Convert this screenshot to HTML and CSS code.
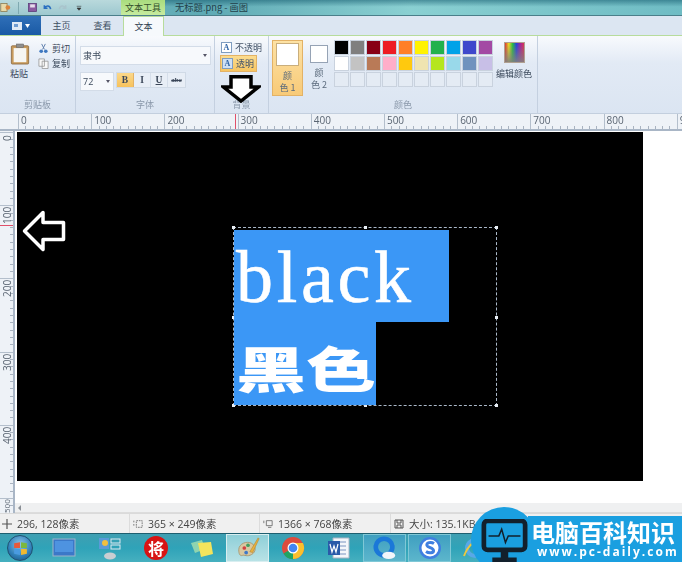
FILE: index.html
```html
<!DOCTYPE html>
<html lang="zh">
<head>
<meta charset="utf-8">
<title>无标题.png - 画图</title>
<link rel="stylesheet" href="styles.css">
</head>
<body>
<div class="app">
  <header class="titlebar">
    <div class="qat">
      <svg class="qi" viewBox="0 0 14 14"><rect x="1" y="2" width="8" height="10" fill="#e8d9a8" stroke="#8a7a50"/><circle cx="10" cy="7" r="3" fill="#d9823b"/></svg>
      <span class="qsep"></span>
      <svg class="qi" viewBox="0 0 14 14"><rect x="2" y="2" width="10" height="10" fill="#8a5aa0" stroke="#5a3a78"/><rect x="4" y="3" width="6" height="4" fill="#e6dcec"/></svg>
      <svg class="qi" viewBox="0 0 14 14"><path d="M3 4v4h4M3.500 8C5 4 10 4 11 9" fill="none" stroke="#2a6fc0" stroke-width="2"/></svg>
      <svg class="qi dim" viewBox="0 0 14 14"><path d="M11 4v4H7M10.500 8C9 4 4 4 3 9" fill="none" stroke="#a9c4cc" stroke-width="2"/></svg>
      <svg class="qi small" viewBox="0 0 14 14"><path d="M3 4h8M3.500 7h7l-3.500 4z" fill="#333" stroke="#333"/></svg>
    </div>
    <div class="tool-tab">文本工具</div>
    <div class="doc-title">无标题.png - 画图</div>
  </header>

  <nav class="tabs">
    <div class="file-btn"><svg viewBox="0 0 20 10" class="file-ico"><rect x="1" y="1" width="10" height="8" fill="#dfe9f5"/><rect x="3" y="3" width="4" height="3" fill="#6f9bd0"/><path d="M14 3h5l-2.500 4z" fill="#fff"/></svg></div>
    <div class="tab">主页</div>
    <div class="tab">查看</div>
    <div class="tab active">文本</div>
  </nav>

  <section class="ribbon">
    <div class="group g-clip">
      <div class="group-body clip-body">
        <div class="paste">
          <svg class="paste-ico" viewBox="0 0 22 24"><rect x="1.500" y="3" width="19" height="20" rx="1" fill="#c89b5c" stroke="#8f7048"/><rect x="4" y="5.500" width="14" height="15.500" fill="#f6f6f2"/><rect x="7" y="1" width="8" height="4" fill="#8f8f8f" stroke="#6a6a6a" stroke-width=".6"/></svg>
          <span>粘贴</span>
        </div>
        <div class="clip-actions">
          <div class="act"><svg viewBox="0 0 12 12"><path d="M4 1l3 6M8 1L5 7" stroke="#5a7ba8" fill="none"/><circle cx="3.500" cy="9" r="2" fill="#3f78c0"/><circle cx="8.500" cy="9" r="2" fill="#3f78c0"/></svg>剪切</div>
          <div class="act"><svg viewBox="0 0 12 12"><path d="M1 1h6v8H1zM4.500 3.500h6.500v8H4.500z" fill="#f8f8f8" stroke="#8f8f8f" stroke-width=".8"/></svg>复制</div>
        </div>
      </div>
      <div class="group-label">剪贴板</div>
    </div>

    <div class="group g-font">
      <div class="group-body font-body">
        <div class="select font-select"><span>隶书</span><i class="caret"></i></div>
        <div class="font-row">
          <div class="select size-select"><span>72</span><i class="caret"></i></div>
          <div class="fmt">
            <b class="fmt-btn on">B</b>
            <i class="fmt-btn">I</i>
            <u class="fmt-btn">U</u>
            <s class="fmt-btn abc">abc</s>
          </div>
        </div>
      </div>
      <div class="group-label">字体</div>
    </div>

    <div class="group g-bg">
      <div class="group-body bg-body">
        <div class="bg-opt"><span class="a-ico">A</span>不透明</div>
        <div class="bg-opt on"><span class="a-ico tr">A</span>透明</div>
      </div>
      <div class="group-label">背景</div>
    </div>

    <div class="group g-color">
      <div class="group-body color-body">
        <div class="color-btn on"><span class="swatch big"></span><span class="color-text">颜<br>色 1</span></div>
        <div class="color-btn"><span class="swatch"></span><span class="color-text">颜<br>色 2</span></div>
        <div class="palette">
          <span class="c c1"></span><span class="c c2"></span><span class="c c3"></span><span class="c c4"></span><span class="c c5"></span><span class="c c6"></span><span class="c c7"></span><span class="c c8"></span><span class="c c9"></span><span class="c c10"></span>
          <span class="c c11"></span><span class="c c12"></span><span class="c c13"></span><span class="c c14"></span><span class="c c15"></span><span class="c c16"></span><span class="c c17"></span><span class="c c18"></span><span class="c c19"></span><span class="c c20"></span>
          <span class="c"></span><span class="c"></span><span class="c"></span><span class="c"></span><span class="c"></span><span class="c"></span><span class="c"></span><span class="c"></span><span class="c"></span><span class="c"></span>
        </div>
        <div class="edit-color"><span class="rainbow"></span><span>编辑颜色</span></div>
      </div>
      <div class="group-label">颜色</div>
    </div>
  </section>

  <div class="hruler">
    <span>0</span><span>100</span><span>200</span><span>300</span><span>400</span><span>500</span><span>600</span><span>700</span><span>800</span><span>900</span>
    <i class="hmark"></i>
  </div>

  <main class="main">
    <div class="vruler">
      <span><em>0</em></span><span><em>100</em></span><span><em>200</em></span><span><em>300</em></span><span><em>400</em></span><span><em>500</em></span>
      <i class="vmark"></i>
    </div>
    <div class="work">
      <div class="canvas">
        <svg class="left-arrow" viewBox="0 0 44 42"><path d="M21 2.500L2.500 21 21 39.500V29.500H41.500V12.500H21z" fill="#000" stroke="#fff" stroke-width="3.500" stroke-linejoin="round"/></svg>
        <div class="selection">
          <i class="h h1"></i><i class="h h2"></i><i class="h h3"></i><i class="h h4"></i><i class="h h5"></i><i class="h h6"></i><i class="h h7"></i><i class="h h8"></i>
        </div>
        <div class="textbox">
          <div class="line-en">black</div>
          <div class="line-cn"><span>黑色</span></div>
        </div>
      </div>
      <div class="hscroll"><i class="scroll-left"></i></div>
    </div>
  </main>

  <footer class="status">
    <div class="st st1"><svg viewBox="0 0 10 10"><path d="M5 0v10M0 5h10" stroke="#555" stroke-width="1.200"/></svg>296, 128像素</div>
    <div class="st st2"><svg viewBox="0 0 12 10"><path d="M1 1v2M1 5v2M4 1h7v8H4z" fill="none" stroke="#666" stroke-dasharray="2 1"/></svg>365 × 249像素</div>
    <div class="st st3"><svg viewBox="0 0 12 10"><path d="M1 1v3M4 1h7v6H4zM6 9h4" fill="none" stroke="#666"/></svg>1366 × 768像素</div>
    <div class="st st4"><svg viewBox="0 0 10 10"><path d="M1 1h8v8H1zM3 1v3h4V1M3 9V6h4v3" fill="none" stroke="#555"/></svg>大小: 135.1KB</div>
  </footer>

  <div class="taskbar">
    <div class="orb"><svg viewBox="0 0 16 16"><path d="M2 3l5.500-1v5.500H2z" fill="#e8593a"/><path d="M8.500 2L14 3v4.500H8.500z" fill="#7cb83c"/><path d="M2 8.500h5.500V14L2 13z" fill="#4a9be0"/><path d="M8.500 8.500H14V13l-5.500 1z" fill="#f1b92f"/></svg></div>
    <div class="task"><svg viewBox="0 0 24 20"><rect x="1" y="1" width="22" height="17" fill="#3b78c8" stroke="#9fb4c8"/><rect x="3" y="3" width="18" height="11" fill="#4e93e0"/></svg></div>
    <div class="task"><svg viewBox="0 0 24 24"><rect x="1" y="2" width="10" height="11" fill="#5a9ad8"/><rect x="13" y="3" width="9" height="4" fill="none" stroke="#dfeaf2"/><rect x="13" y="9" width="9" height="4" fill="none" stroke="#dfeaf2"/><ellipse cx="12" cy="20" rx="6" ry="3.500" fill="#c9ced2"/><circle cx="7" cy="7" r="3" fill="#f0c040"/></svg></div>
    <div class="task"><span class="chess">将</span></div>
    <div class="task"><svg viewBox="0 0 24 22"><path d="M1 6l11-3 3 9-10 4z" fill="#8fd4b0"/><path d="M8 6l13-1 2 12-12 3z" fill="#f4e45c"/></svg></div>
    <div class="task lit"><svg viewBox="0 0 26 26"><path d="M3 15C3 8 12 5 17 8c5 3 5 9 0 12-5 3-8 0-10 1-3 1-4-2-4-6z" fill="#d8c8a0" stroke="#a89870"/><circle cx="9" cy="13" r="2" fill="#d04040"/><circle cx="13" cy="10" r="2" fill="#40a060"/><circle cx="11" cy="18" r="2" fill="#3f78c8"/><path d="M15 17L24 2l1 1-7 15z" fill="#e8b040" stroke="#a87820" stroke-width=".5"/></svg></div>
    <div class="task"><svg viewBox="0 0 24 24"><circle cx="12" cy="12" r="11" fill="#dd4b3e"/><path d="M12 12L2.500 17.500A11 11 0 0 0 14 23z" fill="#1fa463"/><path d="M12 7h9.900A11 11 0 0 1 12 23z" fill="#fbc02d"/><circle cx="12" cy="12" r="5.500" fill="#fff"/><circle cx="12" cy="12" r="4.300" fill="#4285f4"/></svg></div>
    <div class="task"><svg viewBox="0 0 24 24"><path d="M6 2h16v20H6z" fill="#f4f6fa" stroke="#a8b4c4"/><path d="M9 6h10M9 10h10M9 14h10M9 18h10" stroke="#7a94c0"/><rect x="1" y="5" width="12" height="14" fill="#2a5aa8"/><path d="M3 8l2 8 2-6 2 6 2-8" fill="none" stroke="#fff" stroke-width="1.200"/></svg></div>
    <div class="task lit2"><svg viewBox="0 0 26 26"><circle cx="12" cy="12" r="9" fill="none" stroke="#1b78d8" stroke-width="5"/><ellipse cx="17" cy="21" rx="7" ry="4" fill="#f2f6fa"/></svg></div>
    <div class="task lit2"><svg viewBox="0 0 24 24"><circle cx="12" cy="12" r="11" fill="#3f7fe0"/><circle cx="12" cy="12" r="8.500" fill="#fff"/><path d="M16 7.500c-3-2-8-1-7 2 1 2.500 6 2 6.500 5 .3 2.500-4.500 3-7.500 1" fill="none" stroke="#3f7fe0" stroke-width="3"/></svg></div>
    <div class="task"><svg viewBox="0 0 24 24"><circle cx="12" cy="12" r="8" fill="none" stroke="#58a8e8" stroke-width="4"/><path d="M1 20C5 8 16 1 22 3" fill="none" stroke="#f0c83c" stroke-width="2"/></svg></div>
  </div>

  <div class="brand">
    <div class="brand-circle">
      <svg viewBox="0 0 50 48" class="brand-ico"><rect x="3" y="2" width="44" height="31" rx="4" fill="#1a9fe0" stroke="#12202c" stroke-width="5"/><path d="M8 18h11l3-7 4 14 3-7h13" fill="none" stroke="#12202c" stroke-width="1.600"/><path d="M21 35h8v6h-8zM12 41h26v7H12z" fill="#12202c"/></svg>
    </div>
    <div class="brand-band">
      <div class="brand-cn">电脑百科知识</div>
      <div class="brand-url">www.pc-daily.com</div>
    </div>
  </div>

  <svg class="down-arrow" viewBox="0 0 40 28"><path d="M10 1.800H30V12H37.500L20 26 2.500 12H10z" fill="#fff" stroke="#000" stroke-width="3.500"/></svg>
</div>
</body>
</html>
```
FILE: styles.css
```css
* { box-sizing: border-box; }
html, body { margin: 0; padding: 0; background: #fff; }
body { font-family: "Noto Sans CJK SC", "Open Sans", sans-serif; color: #3c4a5c; }
.app { position: relative; width: 682px; height: 562px; overflow: hidden; display: flex; flex-direction: column; filter: blur(.35px); }

.titlebar { height: 16px; display: flex; align-items: stretch; background: linear-gradient(rgba(20,90,110,.55), rgba(20,90,110,0) 45%), linear-gradient(90deg, #7cc0c6 0%, #5ea9b4 30%, #8ad0d2 60%, #6fbcc4 100%); border-bottom: 1px solid #4a7f8a; }
.qat { width: 121px; display: flex; align-items: center; gap: 4px; padding-left: 0; background: linear-gradient(#b9d9dc, #9dc8cf); }
.qi { width: 11px; height: 11px; }
.qi.small { width: 8px; height: 8px; margin-left: 3px; }
.qsep { width: 1px; height: 12px; background: #7fa9b0; margin: 0 4px 0 3px; }
.tool-tab { width: 44px; font-size: 9px; line-height: 15px; text-align: center; color: #33502a; background: linear-gradient(#a9dc7e, #c6eb9f); }
.doc-title { margin-left: 10px; font-size: 9.300px; line-height: 15px; color: #22404a; }

.tabs { height: 20px; display: flex; align-items: stretch; background: #dce6f2; border-bottom: 1px solid #b7dc9c; }
.file-btn { width: 41px; background: linear-gradient(#2f6fb8, #1a5aa5); display: flex; align-items: center; justify-content: center; }
.file-ico { width: 20px; height: 10px; }
.tab { width: 41px; font-size: 9px; line-height: 19px; text-align: center; color: #3f4f62; }
.tab.active { background: #f6f9fc; border: 1px solid #b7dc9c; border-bottom: 0; height: 20px; color: #2e3e52; }

.ribbon { height: 78px; flex: none; display: flex; background: linear-gradient(#f8fafd 0%, #e2eaf5 35%, #dbe5f2 100%); border-bottom: 1px solid #c3cfde; font-size: 9px; }
.group { display: flex; flex-direction: column; border-right: 1px solid #c4d0e0; }
.group-body { flex: 1; min-height: 0; }
.group-label { height: 15px; font-size: 9px; line-height: 13px; text-align: center; color: #8a98aa; }
.g-clip { width: 76px; }
.g-font { width: 139px; }
.g-bg { width: 54px; }
.g-color { width: 269px; }

.clip-body { display: flex; padding: 6px 0 0 10px; }
.paste { width: 28px; display: flex; flex-direction: column; align-items: flex-start; gap: 1px; }
.paste span { line-height: 14px; }
.paste-ico { width: 20px; height: 24px; }
.clip-actions { display: flex; flex-direction: column; gap: 2px; }
.act { display: flex; align-items: center; gap: 3px; height: 13px; line-height: 13px; white-space: nowrap; }
.act svg { width: 11px; height: 11px; }

.font-body { padding: 10px 0 0 4px; display: flex; flex-direction: column; gap: 7px; }
.select { height: 19px; background: #f7f9fc; border: 1px solid #d3dce8; display: flex; align-items: center; justify-content: space-between; padding: 0 3px 0 2px; font-size: 9px; line-height: 17px; }
.font-select { width: 131px; }
.size-select { width: 34px; font-family: "Open Sans", sans-serif; }
.caret { width: 0; height: 0; border: 2px solid transparent; border-top: 3px solid #556; border-bottom: 0; }
.font-row { display: flex; gap: 2px; }
.fmt { display: flex; height: 16px; background: #e8eef6; border: 1px solid #d0dae6; }
.fmt-btn { width: 17px; text-align: center; font: 700 9.500px/14px "Liberation Serif", serif; color: #3a4658; border-right: 1px solid #d5deea; }
.fmt-btn.on { background: linear-gradient(#fbd88a, #f7c25c); border-color: #e3b265; }
.fmt-btn.abc { font-size: 7px; border-right: 0; }

.bg-body { padding: 5px 0 0 5px; display: flex; flex-direction: column; gap: 1px; }
.bg-opt { display: flex; align-items: center; gap: 3px; height: 13px; width: 43px; white-space: nowrap; padding-left: 1px; color: #45556a; }
.bg-opt.on { height: 17px; width: 37px; background: linear-gradient(#fbdc90, #f7c662); border: 1px solid #e3b265; }
.a-ico { width: 11px; height: 11px; border: 1px solid #7f9dc0; background: #fff; font: 700 8px/9px "Liberation Serif", serif; text-align: center; color: #2d62a5; flex: none; }
.a-ico.tr { background: #cfe0f5; }

.color-body { display: flex; align-items: flex-start; padding: 4px 0 0 3px; }
.color-btn { width: 26px; height: 56px; display: flex; flex-direction: column; align-items: center; text-align: center; padding-top: 5px; color: #5a6a7c; }
.color-btn.on { width: 31px; margin-right: 3px; padding-top: 2px; background: linear-gradient(#fde2a5, #f8ca78); border: 1px solid #e3b265; }
.swatch { display: block; width: 18px; height: 18px; background: #fff; border: 1px solid #96a3b5; }
.swatch.big { width: 23px; height: 23px; border-color: #c9ae7c; }
.color-text { margin-top: 4px; line-height: 12px; font-size: 9px; white-space: nowrap; }
.palette { margin: 0 0 0 2px; width: 160px; display: grid; grid-template-columns: repeat(10, 16px); grid-auto-rows: 16px; }
.c { width: 15px; height: 15px; border: 1px solid #c9d2de; background: #e4ebf4; }
.c1 { background: #000; } .c2 { background: #7f7f7f; } .c3 { background: #880015; } .c4 { background: #ed1c24; } .c5 { background: #ff7f27; }
.c6 { background: #fff200; } .c7 { background: #22b14c; } .c8 { background: #00a2e8; } .c9 { background: #3f48cc; } .c10 { background: #a349a4; }
.c11 { background: #fff; } .c12 { background: #c3c3c3; } .c13 { background: #b97a57; } .c14 { background: #ffaec9; } .c15 { background: #ffc90e; }
.c16 { background: #efe4b0; } .c17 { background: #b5e61d; } .c18 { background: #99d9ea; } .c19 { background: #7092be; } .c20 { background: #c8bfe7; }
.edit-color { width: 38px; margin-left: 1px; display: flex; flex-direction: column; align-items: center; gap: 4px; white-space: nowrap; padding-top: 2px; }
.rainbow { width: 21px; height: 21px; border: 1px solid #b0a090; background: linear-gradient(rgba(128,128,128,0), rgba(128,128,128,.9)), linear-gradient(90deg, #e03030, #f0e020, #20c040, #2040e0, #a020a0, #e03050); }

.hruler { position: relative; height: 17px; flex: none; padding-left: 18px; display: flex; background: repeating-linear-gradient(90deg, #a9b3c0 0 1px, transparent 1px 7.320px) 18px 100% / 100% 3px no-repeat, #eef2f7; border-bottom: 2px solid #a9b6c6; }
.hruler span { flex: none; width: 73.200px; padding-left: 2px; border-left: 1px solid #b4bfcc; font: 10px/13px "Open Sans", sans-serif; color: #5a6572; height: 15px; }
.hmark { position: absolute; left: 235px; top: 0; width: 1px; height: 15px; background: #e0506a; }

.main { flex: 1; min-height: 0; display: flex; }
.vruler { position: relative; width: 15px; flex: none; padding-top: 1px; background: repeating-linear-gradient(180deg, #a9b3c0 0 1px, transparent 1px 7.320px) 100% 1px / 3px 100% no-repeat, #eef2f7; border-right: 2px solid #a9b6c6; display: flex; flex-direction: column; overflow: hidden; }
.vruler span { flex: none; height: 73.200px; border-top: 1px solid #b4bfcc; padding-left: 1px; }
.vruler em { display: block; width: 12px; writing-mode: vertical-rl; transform: rotate(180deg); font: normal 10px/12px "Open Sans", sans-serif; color: #5a6572; height: 18px; text-align: left; }
.vruler span:first-child em { height: 8px; }
.vruler span:last-of-type em { height: 14px; font-size: 8px; }
.vmark { position: absolute; left: 0; top: 94px; width: 13px; height: 1px; background: #e0506a; }

.work { position: relative; flex: 1; min-width: 0; display: flex; flex-direction: column; justify-content: space-between; background: #fff; padding-top: 1px; overflow: hidden; }
.canvas { position: relative; width: 626px; height: 349px; background: #000; flex: none; margin-left: 2px; }
.hscroll { height: 10px; background: #eff0f1; border-bottom: 1px solid #dcdcdc; position: relative; flex: none; }
.scroll-left { position: absolute; left: 3px; top: 2px; width: 0; height: 0; border: 3px solid transparent; border-right: 3px solid #8a8f96; border-left: 0; }

.left-arrow { position: absolute; left: 5px; top: 78px; width: 44px; height: 42px; }
.selection { position: absolute; left: 216px; top: 95px; width: 264px; height: 179px; border: 1px dashed #aab8c8; }
.h { position: absolute; width: 3px; height: 3px; background: #e8eef4; }
.h1 { left: -2px; top: -2px; } .h2 { left: 130px; top: -2px; } .h3 { right: -2px; top: -2px; } .h4 { left: -2px; top: 88px; }
.h5 { right: -2px; top: 88px; } .h6 { left: -2px; bottom: -2px; } .h7 { left: 130px; bottom: -2px; } .h8 { right: -2px; bottom: -2px; }
.textbox { position: absolute; left: 217px; top: 98px; display: flex; flex-direction: column; align-items: flex-start; color: #fff; }
.line-en { width: 215px; height: 92px; background: #3b97f6; font: 400 74px/94px "Liberation Serif", serif; letter-spacing: 3.700px; padding-left: 2px; overflow: hidden; -webkit-text-stroke: .6px #fff; }
.line-cn { width: 142px; height: 83px; background: #3b97f6; overflow: hidden; font: 900 70px/83px "Noto Sans CJK SC", sans-serif; padding-left: 2px; white-space: nowrap; }
.line-cn span { display: inline-block; transform: translateY(1px) scaleY(.7); transform-origin: 50% 60%; }

.status { height: 20px; flex: none; display: flex; background: #f0f0f0; border-top: 1px solid #dadada; font: 10.500px/18px "Open Sans", "Noto Sans CJK SC", sans-serif; color: #444; }
.st { display: flex; align-items: center; white-space: nowrap; border-right: 1px solid #dcdcdc; }
.st svg { width: 10px; height: 10px; flex: none; margin-right: 5px; }
.st1 { width: 130px; padding-left: 2px; }
.st2 { width: 130px; padding-left: 3px; }
.st3 { width: 131px; padding-left: 3px; }
.st4 { flex: 1; padding-left: 3px; border-right: 0; }

.taskbar { height: 29px; flex: none; display: flex; align-items: stretch; background: linear-gradient(#3f9fb2, #2fa3b8 50%, #46b0bf); border-top: 1px solid #1e5f70; padding-left: 7px; }
.orb { width: 26px; height: 26px; margin: 1px 8px 0 0; flex: none; border-radius: 50%; background: radial-gradient(circle at 50% 35%, #8fc6e8, #2f7fb8 60%, #184f78); border: 1px solid #1f4f70; display: flex; align-items: center; justify-content: center; }
.orb svg { width: 17px; height: 17px; }
.task { width: 46px; flex: none; display: flex; align-items: center; justify-content: center; }
.task svg { width: 24px; height: 24px; }
.task.lit { background: linear-gradient(#8fcfd8, #b8e2e6); border: 1px solid #d8eef0; width: 43px; margin: 0 1px; }
.task.lit2 { background: linear-gradient(#3f9fc0, #5cb6cc); border: 1px solid #7fc8d6; width: 43px; margin: 0 1px; }
.chess { width: 24px; height: 24px; border-radius: 50%; background: #d81414; color: #fff; font: 700 16px/24px "Noto Sans CJK SC", sans-serif; text-align: center; }

.brand { position: absolute; left: 471px; top: 507px; width: 211px; height: 55px; }
.brand-circle { position: absolute; left: 0; top: 0; width: 66px; height: 66px; border-radius: 50%; background: #1a9fe0; display: flex; justify-content: center; padding-top: 12px; }
.brand-ico { width: 47px; height: 45px; }
.brand-band { position: absolute; left: 57px; top: 9px; width: 154px; height: 46px; background: #1a9fe0; color: #fff; padding: 3px 0 0 3px; }
.brand-cn { font: 700 24px/26px "Noto Sans CJK SC", sans-serif; white-space: nowrap; }
.brand-url { font: 700 12px/14px "Open Sans", sans-serif; letter-spacing: 2px; white-space: nowrap; margin-left: 6px; }

.down-arrow { position: absolute; left: 221px; top: 75px; width: 40px; height: 28px; }
```
